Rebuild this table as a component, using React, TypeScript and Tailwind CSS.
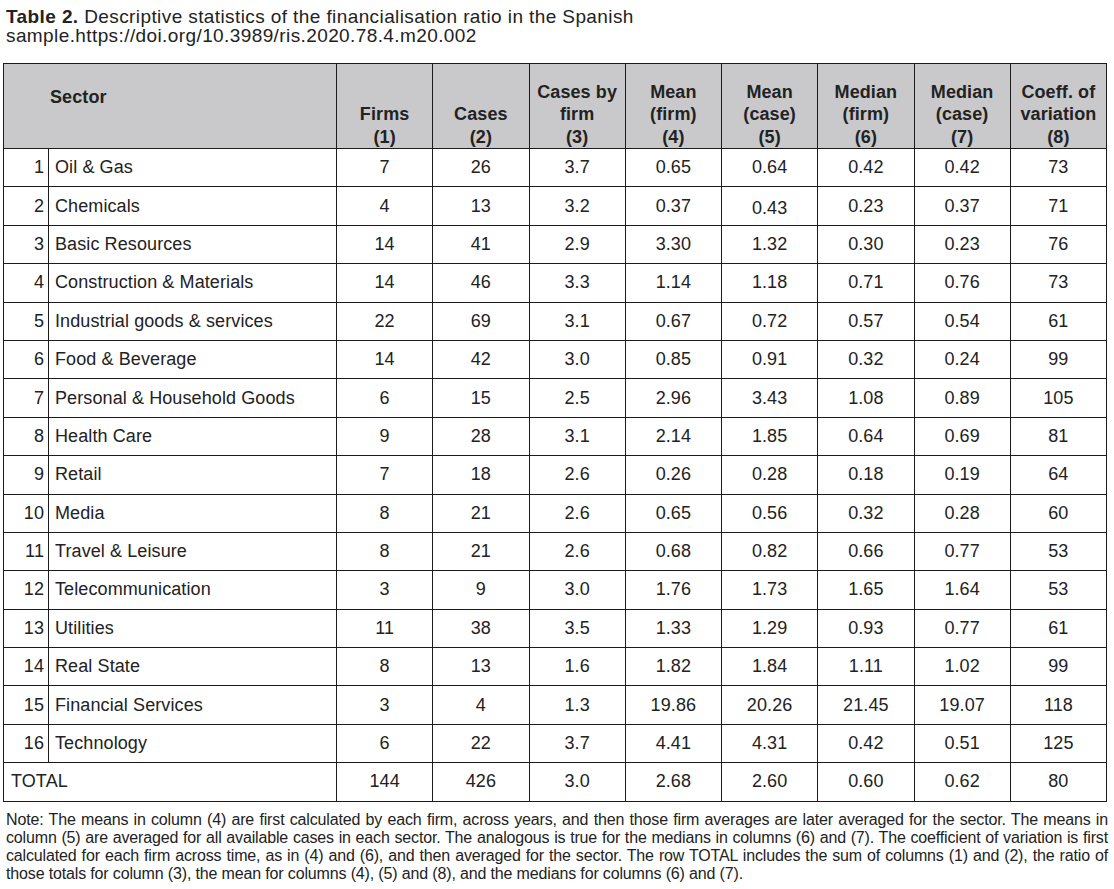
import type { ReactNode } from "react";

type Row = [string, number, number, string, string, string, string, string, number];

const rows: Row[] = [
  ["Oil & Gas", 7, 26, "3.7", "0.65", "0.64", "0.42", "0.42", 73],
  ["Chemicals", 4, 13, "3.2", "0.37", "0.43", "0.23", "0.37", 71],
  ["Basic Resources", 14, 41, "2.9", "3.30", "1.32", "0.30", "0.23", 76],
  ["Construction & Materials", 14, 46, "3.3", "1.14", "1.18", "0.71", "0.76", 73],
  ["Industrial goods & services", 22, 69, "3.1", "0.67", "0.72", "0.57", "0.54", 61],
  ["Food & Beverage", 14, 42, "3.0", "0.85", "0.91", "0.32", "0.24", 99],
  ["Personal & Household Goods", 6, 15, "2.5", "2.96", "3.43", "1.08", "0.89", 105],
  ["Health Care", 9, 28, "3.1", "2.14", "1.85", "0.64", "0.69", 81],
  ["Retail", 7, 18, "2.6", "0.26", "0.28", "0.18", "0.19", 64],
  ["Media", 8, 21, "2.6", "0.65", "0.56", "0.32", "0.28", 60],
  ["Travel & Leisure", 8, 21, "2.6", "0.68", "0.82", "0.66", "0.77", 53],
  ["Telecommunication", 3, 9, "3.0", "1.76", "1.73", "1.65", "1.64", 53],
  ["Utilities", 11, 38, "3.5", "1.33", "1.29", "0.93", "0.77", 61],
  ["Real State", 8, 13, "1.6", "1.82", "1.84", "1.11", "1.02", 99],
  ["Financial Services", 3, 4, "1.3", "19.86", "20.26", "21.45", "19.07", 118],
  ["Technology", 6, 22, "3.7", "4.41", "4.31", "0.42", "0.51", 125],
];

const heads: string[][] = [
  ["Firms", "(1)"],
  ["Cases", "(2)"],
  ["Cases by", "firm", "(3)"],
  ["Mean", "(firm)", "(4)"],
  ["Mean", "(case)", "(5)"],
  ["Median", "(firm)", "(6)"],
  ["Median", "(case)", "(7)"],
  ["Coeff. of", "variation", "(8)"],
];

const cell = "border border-[#1c1c1c] p-0";

function Num({ children, nudge }: { children: ReactNode; nudge?: boolean }) {
  return (
    <td className={`${cell} text-center ${nudge ? "pt-[5px]" : ""}`}>{children}</td>
  );
}

export default function App() {
  return (
    <div className="min-h-screen bg-white text-[#222] [font-family:'Liberation_Sans',Arial,sans-serif]">
      <p className="pl-[6px] pt-[6.5px] text-[19px] leading-[19px] tracking-[0.4px]">
        <b>Table 2.</b> Descriptive statistics of the financialisation ratio in the Spanish
        <br />
        sample.https://doi.org/10.3989/ris.2020.78.4.m20.002
      </p>

      <table className="ml-[3px] mt-[18.5px] w-[1103px] table-fixed border-collapse text-[18px] tracking-[0.1px]">
        <colgroup>
          <col className="w-[45px]" />
          <col className="w-[288px]" />
          {heads.map((_, i) => (
            <col key={i} className="w-[96.25px]" />
          ))}
        </colgroup>
        <thead>
          <tr className="h-[85px] bg-[#c9c9cb] font-bold">
            <th colSpan={2} className={`${cell} pl-[46px] pt-[22px] text-left align-top leading-[22px]`}>
              Sector
            </th>
            {heads.map((h, i) => (
              <th key={i} className={`${cell} pb-[0px] text-center align-bottom leading-[22.5px]`}>
                {h.map((l, j) => (
                  <div key={j}>{l}</div>
                ))}
              </th>
            ))}
          </tr>
        </thead>
        <tbody>
          {rows.map((r, i) => (
            <tr key={i} className="h-[38.4px]">
              <td className={`${cell} pr-[4px] text-right`}>{i + 1}</td>
              <td className={`${cell} pl-[6px] text-left`}>{r[0]}</td>
              <Num>{r[1]}</Num>
              <Num>{r[2]}</Num>
              <Num>{r[3]}</Num>
              <Num>{r[4]}</Num>
              <Num nudge={i === 1}>{r[5]}</Num>
              <Num>{r[6]}</Num>
              <Num>{r[7]}</Num>
              <Num>{r[8]}</Num>
            </tr>
          ))}
          <tr className="h-[38.4px]">
            <td colSpan={2} className={`${cell} pl-[7px] text-left`}>
              TOTAL
            </td>
            <Num>144</Num>
            <Num>426</Num>
            <Num>3.0</Num>
            <Num>2.68</Num>
            <Num>2.60</Num>
            <Num>0.60</Num>
            <Num>0.62</Num>
            <Num>80</Num>
          </tr>
        </tbody>
      </table>

      <p className="mt-[9px] w-[1108px] pl-[6px] text-justify text-[16px] leading-[18px] tracking-[-0.15px]">
        Note: The means in column (4) are first calculated by each firm, across years, and then
        those firm averages are later averaged for the sector. The means in column (5) are averaged
        for all available cases in each sector. The analogous is true for the medians in columns (6)
        and (7). The coefficient of variation is first calculated for each firm across time, as in
        (4) and (6), and then averaged for the sector. The row TOTAL includes the sum of columns (1)
        and (2), the ratio of those totals for column (3), the mean for columns (4), (5) and (8),
        and the medians for columns (6) and (7).
      </p>
    </div>
  );
}
